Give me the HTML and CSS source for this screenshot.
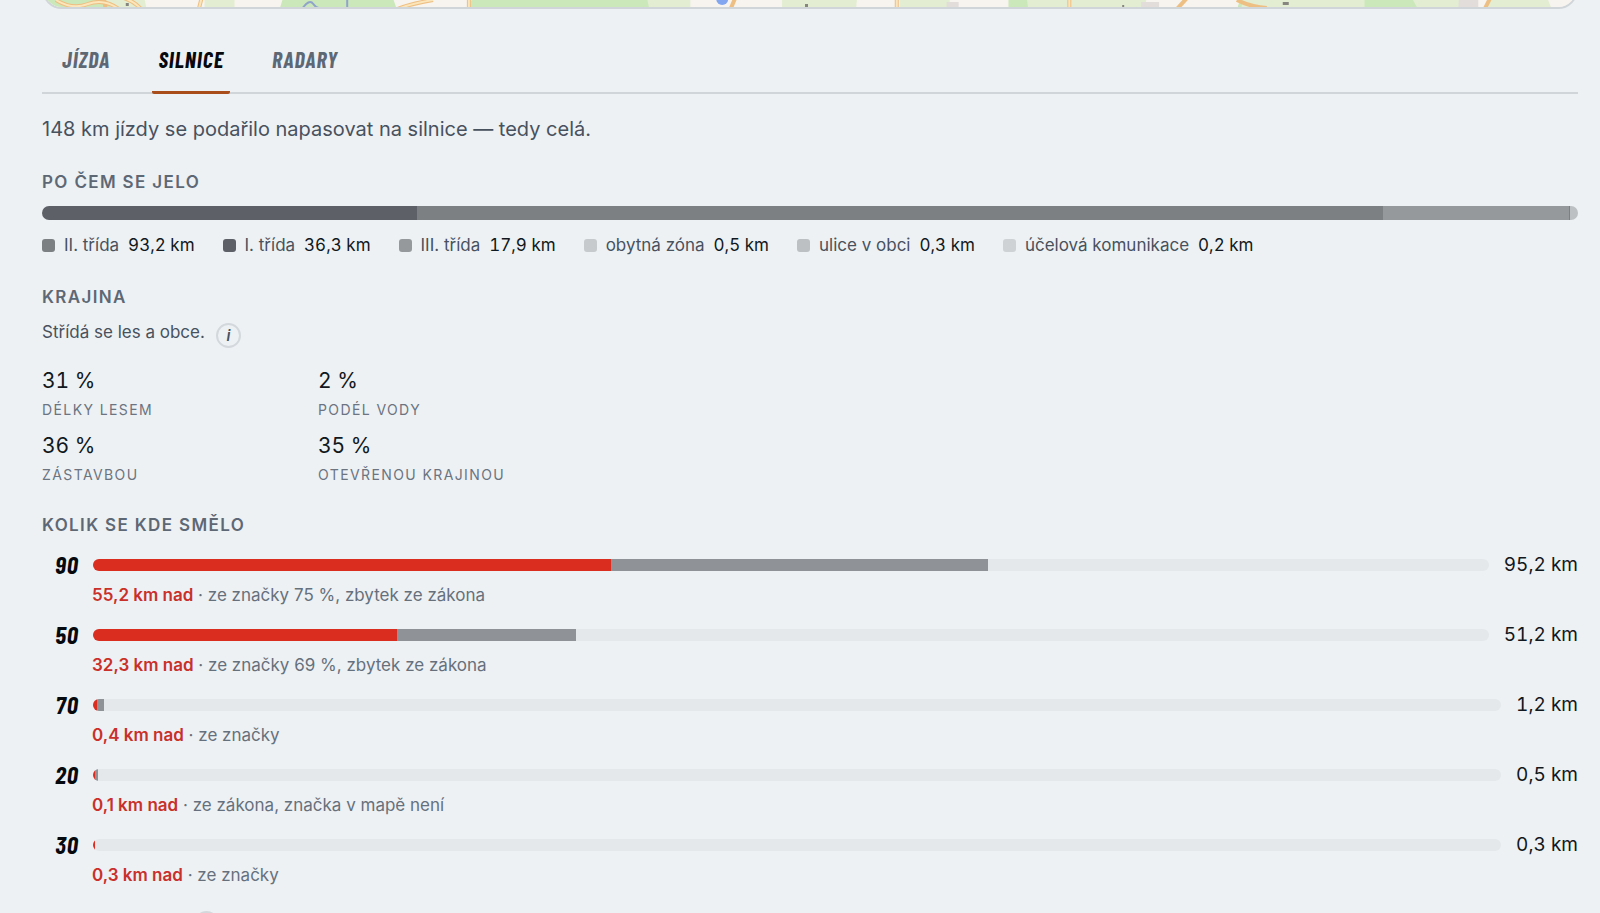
FILE: index.html
```html
<!DOCTYPE html>
<html lang="cs">
<head>
  <meta charset="utf-8">
  <meta name="viewport" content="width=device-width, initial-scale=1">
  <title>Silnice</title>
  <link rel="stylesheet" href="styles.css">
</head>
<body>
  <main class="page">
    <div class="map">
      <svg viewBox="0 0 1536 40" preserveAspectRatio="none" aria-hidden="true">
        <rect width="1536" height="40" fill="#f7f3ee"/>
        <g fill="#e2edd1">
          <path d="M0 0H95L103 40H0zM161 0h30v40h-30zM599 0h49v40h-56zM740 0h78l-4 40h-74zM858 0h50v40h-50zM983 0h125l-4 40H983zM1205 0h232v40h-240zM1448 0h48l16 40h-64z"/>
        </g>
        <g fill="#cbe8ba">
          <path d="M0 0h30l40 40H0zM248 0h92l14 40H236zM436 0h163l8 40H426zM967 0h14l6 40h-20zM1324 0h32l22 40h-54zM1208 0l-8 40h-4z"/>
        </g>
        <path d="M1420 0h18v40h-20zM1100 32h18v8h-18zM905 32h12v8h-12z" fill="#e2dddb"/>
        <g fill="none" stroke="#eebf82" stroke-width="4">
          <path d="M12 30Q28 40 44 34T75 39M62 40L60 28M80 28Q92 32 98 40M158 28L155 40M352 40Q366 34 390 30M426 28v12M693 28L688 40M855 28v12M1028 28v12M1135 40L1146 28M1196 30Q1210 37 1226 38M1450 28L1444 40"/>
        </g>
        <g fill="none" stroke="#fbe6bb" stroke-width="2">
          <path d="M12 30Q28 40 44 34T75 39M80 28Q92 32 98 40M158 28L155 40M352 40Q366 34 390 30M426 28v12M855 28v12M1028 28v12"/>
        </g>
        <path d="M258 40Q266 28 270 34T287 39M304 28v12" fill="none" stroke="#8fa3cb" stroke-width="2"/>
        <circle cx="680" cy="29" r="6" fill="#82a7f0"/>
        <path d="M82 33h3v3h-3zM763 34h3v3h-3zM1081 35h2v4h-2zM1242 32h6v3h-6z" fill="#87857f"/>
      </svg>
    </div>

    <nav class="tabs">
      <a href="#jizda">Jízda</a>
      <a href="#silnice" class="active" aria-current="page">Silnice</a>
      <a href="#radary">Radary</a>
    </nav>

    <p class="lead">148 km jízdy se podařilo napasovat na silnice — tedy celá.</p>

    <section class="roads">
      <h2>Po čem se jelo</h2>
      <div class="stack">
        <span class="c1" style="width: 24.4%"></span>
        <span class="c2" style="width: 62.9%"></span>
        <span class="c3" style="width: 12.1%"></span>
        <span class="c2" style="width: 0.1%"></span>
        <span class="c5" style="width: 0.5%"></span>
      </div>
      <ul class="legend">
        <li><i class="c2"></i>II. třída <b>93,2 km</b></li>
        <li><i class="c1"></i>I. třída <b>36,3 km</b></li>
        <li><i class="c3"></i>III. třída <b>17,9 km</b></li>
        <li><i class="c4"></i>obytná zóna <b>0,5 km</b></li>
        <li><i class="c5"></i>ulice v obci <b>0,3 km</b></li>
        <li><i class="c6"></i>účelová komunikace <b>0,2 km</b></li>
      </ul>
    </section>

    <section class="landscape">
      <h2>Krajina</h2>
      <div class="note">
        <p>Střídá se les a obce.</p>
        <button type="button" class="info">i</button>
      </div>
      <dl class="stats">
        <div><dd>31 %</dd><dt>délky lesem</dt></div>
        <div><dd>2 %</dd><dt>podél vody</dt></div>
        <div><dd>36 %</dd><dt>zástavbou</dt></div>
        <div><dd>35 %</dd><dt>otevřenou krajinou</dt></div>
      </dl>
    </section>

    <section class="limits">
      <h2>Kolik se kde smělo</h2>
      <div class="limit">
        <div class="row">
          <span class="speed">90</span>
          <div class="track"><span class="over" style="width: 37.1%"></span><span class="rest" style="width: 27%"></span></div>
          <span class="km">95,2 km</span>
        </div>
        <p><b>55,2 km nad</b> · ze značky 75 %, zbytek ze zákona</p>
      </div>
      <div class="limit">
        <div class="row">
          <span class="speed">50</span>
          <div class="track"><span class="over" style="width: 21.8%"></span><span class="rest" style="width: 12.8%"></span></div>
          <span class="km">51,2 km</span>
        </div>
        <p><b>32,3 km nad</b> · ze značky 69 %, zbytek ze zákona</p>
      </div>
      <div class="limit">
        <div class="row">
          <span class="speed">70</span>
          <div class="track"><span class="over" style="width: 0.3%"></span><span class="rest" style="width: 0.5%"></span></div>
          <span class="km">1,2 km</span>
        </div>
        <p><b>0,4 km nad</b> · ze značky</p>
      </div>
      <div class="limit">
        <div class="row">
          <span class="speed">20</span>
          <div class="track"><span class="over" style="width: 0.15%"></span><span class="rest" style="width: 0.2%"></span></div>
          <span class="km">0,5 km</span>
        </div>
        <p><b>0,1 km nad</b> · ze zákona, značka v mapě není</p>
      </div>
      <div class="limit">
        <div class="row">
          <span class="speed">30</span>
          <div class="track"><span class="over" style="width: 0.15%"></span></div>
          <span class="km">0,3 km</span>
        </div>
        <p><b>0,3 km nad</b> · ze značky</p>
      </div>
    </section>

    <div class="more">
      <button type="button" class="info" aria-label="Informace"></button>
    </div>
  </main>
</body>
</html>
```

FILE: styles.css
```css
* {
  box-sizing: border-box;
  margin: 0;
  padding: 0;
}

html {
  height: 100%;
  overflow: hidden;
}

body {
  height: 100%;
  overflow: hidden;
  background: #edf1f4;
  color: #111820;
  font-family: Inter, "Noto Sans", sans-serif;
  font-size: 18px;
  line-height: 24px;
}

.page {
  padding: 0 22px 0 42px;
}

/* only the lower edge of the map reaches into view */
.map {
  height: 41px;
  margin-top: -32px;
  border: 2px solid #d0d5d9;
  border-radius: 20px;
  overflow: hidden;
}

.map svg {
  display: block;
  width: 100%;
  height: 40px;
}

.tabs {
  display: flex;
  gap: 36px;
  margin-top: 24px;
  padding-left: 14px;
  border-bottom: 2px solid #d0d5d9;
}

.tabs a {
  padding: 14px 6px 20px;
  margin-bottom: -2px;
  border-bottom: 3px solid transparent;
  color: #5e6875;
  font-family: "Barlow Condensed", "Liberation Sans Narrow", "Liberation Sans", sans-serif;
  font-size: 22px;
  font-weight: 700;
  font-style: italic;
  letter-spacing: 1px;
  text-transform: uppercase;
  text-decoration: none;
}

.tabs a.active {
  border-color: #a94e1b;
  border-radius: 2px;
  color: #06090d;
}

.lead {
  margin-top: 20px;
  color: #48515e;
  font-size: 20px;
  line-height: 30px;
}

h2 {
  color: #5e6875;
  font-size: 17px;
  font-weight: 600;
  letter-spacing: 0.08em;
  text-transform: uppercase;
}

.roads {
  margin-top: 26px;
}

.stack {
  display: flex;
  height: 14px;
  margin-top: 12px;
  border-radius: 7px;
  overflow: hidden;
}

.c1 { background: #5d6167; }
.c2 { background: #7c8083; }
.c3 { background: #95999c; }
.c4 { background: #c6cacd; }
.c5 { background: #bcc0c3; }
.c6 { background: #ced2d5; }

.legend {
  display: flex;
  flex-wrap: wrap;
  gap: 8px 28px;
  margin-top: 13px;
  list-style: none;
  color: #48515e;
  font-size: 17px;
}

.legend li {
  display: flex;
  align-items: center;
  gap: 9px;
}

.legend i {
  width: 13px;
  height: 13px;
  border-radius: 3px;
}

.legend b {
  color: #111820;
  font-weight: 400;
  font-variant-numeric: tabular-nums;
}

.landscape {
  margin-top: 28px;
}

.note {
  display: flex;
  align-items: flex-end;
  gap: 11px;
  margin-top: 11px;
  color: #48515e;
  font-size: 17px;
}

.note p {
  padding-bottom: 4px;
}

.info {
  width: 25px;
  height: 25px;
  border: 2px solid #d3d8dc;
  border-radius: 50%;
  background: none;
  color: #48515e;
  font-family: Inter, sans-serif;
  font-size: 15px;
  font-style: italic;
  font-weight: 600;
  line-height: 20px;
}

.stats {
  display: grid;
  grid-template-columns: 276px 276px;
  row-gap: 7px;
  margin-top: 16px;
}

.stats div {
  display: flex;
  flex-direction: column;
}

.stats dd {
  font-size: 21px;
  line-height: 34px;
  font-variant-numeric: tabular-nums;
}

.stats dt {
  color: #6b7480;
  font-size: 14px;
  letter-spacing: 0.1em;
  text-transform: uppercase;
}

.limits {
  margin-top: 26px;
}

.limit {
  padding-top: 16px;
}

.row {
  display: flex;
  align-items: center;
  gap: 15px;
}

.speed {
  width: 36px;
  color: #06090d;
  font-family: "Barlow Condensed", "Liberation Sans Narrow", "Liberation Sans", sans-serif;
  font-size: 24px;
  font-weight: 700;
  font-style: italic;
  font-variant-numeric: tabular-nums;
  text-align: right;
}

.track {
  flex: 1;
  display: flex;
  height: 12px;
  border-radius: 6px;
  background: #e4e8eb;
  overflow: hidden;
}

.over {
  background: #db2c20;
}

.rest {
  background: #8f9397;
}

.km {
  font-size: 19px;
  font-variant-numeric: tabular-nums;
}

.limit p {
  margin-top: 6px;
  padding-left: 50px;
  color: #66707c;
  font-size: 17px;
}

.limit b {
  color: #c9302a;
  font-weight: 600;
}

.more {
  margin-top: 24px;
  padding-left: 152px;
}
```
